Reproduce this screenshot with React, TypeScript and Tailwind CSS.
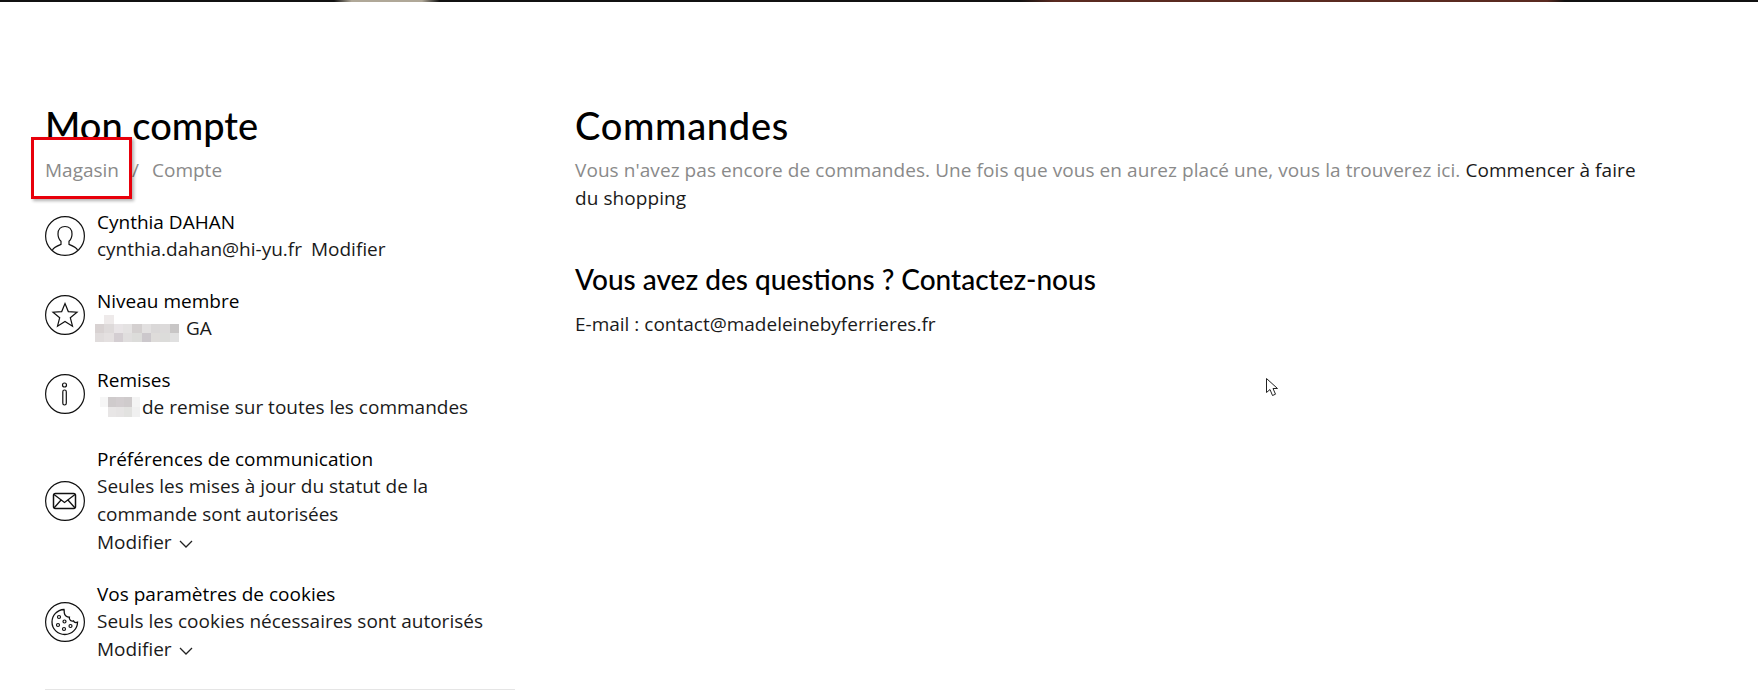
import React from "react";

const mosaicA = [
  "bg-white", "bg-[#eeeaea]", "bg-white", "bg-white", "bg-white", "bg-white", "bg-white", "bg-white", "bg-white",
  "bg-[#d8d2d2]", "bg-[#dedada]", "bg-[#e8e4e6]", "bg-[#e4e2e2]", "bg-[#d4d0d0]", "bg-[#e2e0e0]", "bg-[#dad8d8]", "bg-[#dcdada]", "bg-[#c8c6c6]",
  "bg-[#e0dcdc]", "bg-[#e4e0e0]", "bg-[#d4ced2]", "bg-[#e0dede]", "bg-[#dcdcda]", "bg-[#ccc8cc]", "bg-[#dedcda]", "bg-[#dcdcda]", "bg-[#e0e0e0]",
];

const mosaicB = [
  "bg-[#f6f6f6]", "bg-[#cfcbcc]", "bg-[#d2cdcf]", "bg-[#cfcbcc]", "bg-[#f4f4f4]",
  "bg-white", "bg-[#e8e6e6]", "bg-[#e6e4e4]", "bg-[#e2e2e0]", "bg-[#f0f0f0]",
];

function Circle({ children }: { children: React.ReactNode }) {
  return (
    <svg width="40" height="40" viewBox="0 0 40 40" fill="none" stroke="#111" strokeWidth="1.2" className="shrink-0">
      <circle cx="20" cy="20" r="19.4" />
      {children}
    </svg>
  );
}

function Chevron() {
  return (
    <svg width="14" height="8" viewBox="0 0 14 8" fill="none" stroke="#222" strokeWidth="1.3" className="ml-[7px] inline-block align-middle">
      <path d="M1 1l6 6 6-6" />
    </svg>
  );
}

function Row({ icon, title, children }: { icon: React.ReactNode; title: string; children: React.ReactNode }) {
  return (
    <div className="flex items-center gap-[12px]">
      {icon}
      <div>
        <div className="text-[19px] leading-[26px] font-medium text-black">{title}</div>
        <div className="text-[19px] leading-[28px] text-[#1a1a1a]">{children}</div>
      </div>
    </div>
  );
}

export default function App() {
  return (
    <div className="relative h-[699px] overflow-hidden bg-white font-['Open_Sans',sans-serif]">
      <div className="h-[2px] bg-[linear-gradient(90deg,#111_0%,#111_19%,#b0a898_20%,#b0a898_24%,#111_25%,#111_58%,#5a2a20_60%,#5a2a20_88%,#111_89%,#111_100%)]" />

      <div className="flex pl-[45px] pt-[99px]">
        {/* Sidebar */}
        <aside className="w-[470px] shrink-0">
          <h1 className="font-['Lato',sans-serif] text-[38px] leading-[48px] font-medium text-black">Mon compte</h1>
          <div className="mt-[7px] flex gap-[13px] text-[19px] leading-[28px] text-[#8a8a8a]">
            <span>Magasin</span>
            <span>/</span>
            <span>Compte</span>
          </div>

          <div className="mt-[25px] flex flex-col gap-[25px]">
            <Row
              title="Cynthia DAHAN"
              icon={
                <Circle>
                  <path d="M7.500 34c1-2.500 4-3.800 8.500-5.600v-3.200c-2-1.700-3-4-3-7.200 0-4.600 2.800-7.500 7-7.500s7 2.900 7 7.500c0 3.200-1 5.500-3 7.200v3.200c4.500 1.800 7.500 3.100 8.500 5.600" />
                </Circle>
              }
            >
              cynthia.dahan@hi-yu.fr <span className="ml-[4px]">Modifier</span>
            </Row>

            <Row
              title="Niveau membre"
              icon={
                <Circle>
                  <path d="M20 8.500l3.300 8.100 8.700.6-6.700 5.500 2.200 8.500-7.500-4.700-7.500 4.700 2.200-8.500L8 17.200l8.700-.6z" />
                </Circle>
              }
            >
              <span className="flex items-center">
                <span className="-ml-[2px] grid w-[84px] grid-cols-9">
                  {mosaicA.map((c, i) => (
                    <span key={i} className={`h-[9px] ${c}`} />
                  ))}
                </span>
                <span className="ml-[7px]">GA</span>
              </span>
            </Row>

            <Row
              title="Remises"
              icon={
                <Circle>
                  <circle cx="19.500" cy="11" r="2" />
                  <rect x="17.800" y="16" width="3.500" height="15" rx="1.700" />
                </Circle>
              }
            >
              <span className="flex items-center">
                <span className="ml-[3px] grid w-[40px] grid-cols-5">
                  {mosaicB.map((c, i) => (
                    <span key={i} className={`h-[10px] ${c}`} />
                  ))}
                </span>
                <span className="ml-[2px]">de remise sur toutes les commandes</span>
              </span>
            </Row>

            <Row
              title="Préférences de communication"
              icon={
                <Circle>
                  <rect x="8.500" y="12.500" width="22" height="15" rx="2" strokeWidth="1.500" />
                  <path d="M9 13.500l10.500 8 10.500-8M9 27l7.500-8.500M30 27l-7.500-8.500" strokeWidth="1.300" />
                </Circle>
              }
            >
              Seules les mises à jour du statut de la
              <br />
              commande sont autorisées
              <br />
              Modifier
              <Chevron />
            </Row>

            <Row
              title="Vos paramètres de cookies"
              icon={
                <Circle>
                  <path d="M19 7.500c-7 .3-12 6-12 12.500 0 7 5.700 12.500 12.800 12.500 7 0 12.600-5.500 12.700-12.300-1.600.6-3.400.1-4.100-1.300-1.700.5-3.400-.4-3.900-2-.2-.6-.2-1.100-.1-1.700-2.500.2-4.900-1.900-5.100-4.300-.1-1.100 0-2.200-.3-3.400z" strokeWidth="1.300" />
                  <circle cx="14" cy="15" r="1.500" />
                  <circle cx="19.500" cy="19.500" r="1.500" />
                  <circle cx="13" cy="23" r="1.500" />
                  <circle cx="19" cy="27" r="1.500" />
                  <circle cx="25.500" cy="24" r="1.500" />
                </Circle>
              }
            >
              Seuls les cookies nécessaires sont autorisés
              <br />
              Modifier
              <Chevron />
            </Row>
          </div>

          <hr className="mt-[26px] border-t border-[#e5e5e5]" />
        </aside>

        {/* Main */}
        <main className="ml-[60px] w-[1070px]">
          <h1 className="font-['Lato',sans-serif] text-[38px] leading-[48px] font-medium tracking-[0.7px] text-black">Commandes</h1>
          <p className="mt-[7px] text-[19px] leading-[28px] tracking-[0.07px] text-[#8a8a8a]">
            Vous n'avez pas encore de commandes. Une fois que vous en aurez placé une, vous la trouverez ici.{" "}
            <span className="text-[#1a1a1a]">Commencer à faire du shopping</span>
          </p>
          <h2 className="mt-[48px] font-['Lato',sans-serif] text-[28px] leading-[38px] font-medium text-black">
            Vous avez des questions ? Contactez-nous
          </h2>
          <p className="mt-[12px] text-[19px] leading-[28px] text-[#1a1a1a]">E-mail : contact@madeleinebyferrieres.fr</p>
        </main>
      </div>

      {/* red annotation box */}
      <div className="absolute left-[31px] top-[137px] h-[62px] w-[101px] border-[3px] border-[#e8000b] shadow-[2px_2px_3px_rgba(0,0,0,0.3)]" />

      {/* mouse cursor */}
      <svg className="absolute left-[1265px] top-[377px]" width="15" height="21" viewBox="0 0 15 21" fill="white" stroke="#222" strokeWidth="1">
        <path d="M1.500 1.500v14l3.500-3 2.500 6 3-1.300-2.500-5.700h4.500z" />
      </svg>
    </div>
  );
}
